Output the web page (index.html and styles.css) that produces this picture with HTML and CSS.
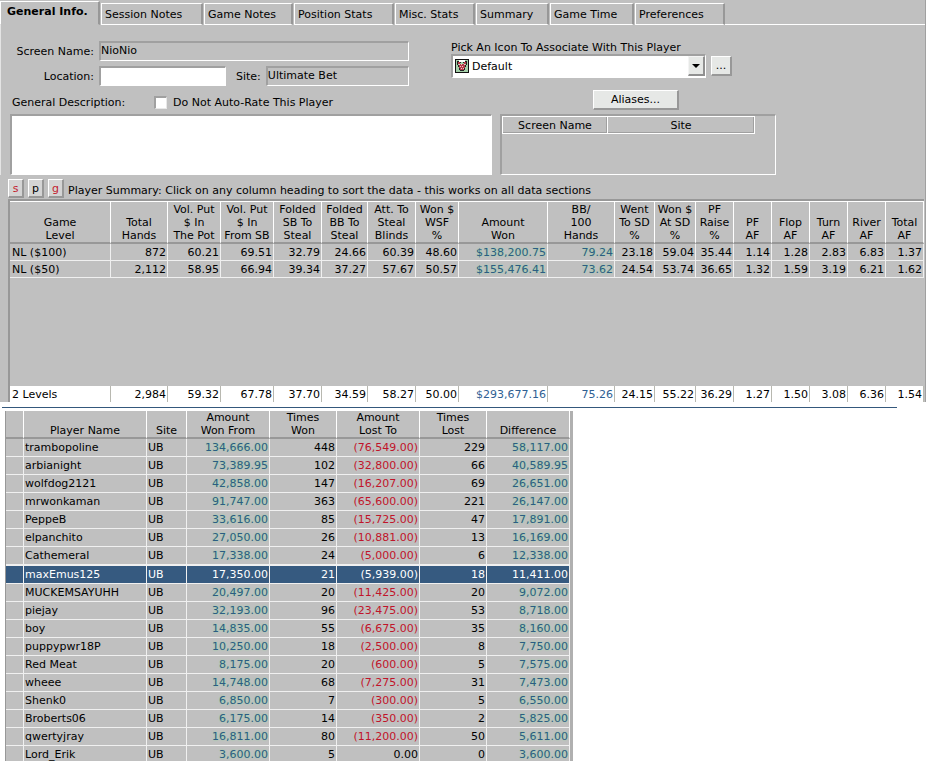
FILE: index.html
```html
<!DOCTYPE html>
<html lang="en">
<head>
<meta charset="utf-8">
<title>Player Information</title>
<link rel="stylesheet" href="styles.css">
</head>
<body>
<main class="panel">
  <nav class="tabs">
    <button class="tab active">General Info.</button>
    <button class="tab session">Session Notes</button>
    <button class="tab notes">Game Notes</button>
    <button class="tab position">Position Stats</button>
    <button class="tab misc">Misc. Stats</button>
    <button class="tab summary-tab">Summary</button>
    <button class="tab time">Game Time</button>
    <button class="tab prefs">Preferences</button>
    <span class="tab-rest"></span>
  </nav>

  <form class="form">
    <div class="left">
      <div class="field-row">
        <label class="lead" for="screen">Screen Name:</label>
        <input class="field grow readonly" id="screen" value="NioNio" readonly>
      </div>
      <div class="field-row">
        <label class="lead" for="location">Location:</label>
        <input class="field location" id="location">
        <label class="site-label" for="site">Site:</label>
        <input class="field grow readonly" id="site" value="Ultimate Bet" readonly>
      </div>
      <div class="desc-row">
        <label class="desc-label" for="desc">General Description:</label>
        <input class="check" type="checkbox" id="rate">
        <label for="rate">Do Not Auto-Rate This Player</label>
      </div>
      <textarea class="desc" id="desc"></textarea>
    </div>
    <div class="right">
      <div class="picker">
        <label for="icon">Pick An Icon To Associate With This Player</label>
        <div class="picker-row">
          <div class="combo">
            <select class="select" id="icon"><option>Default</option></select>
            <svg class="face" viewBox="0 0 14 14" width="14" height="14" aria-hidden="true">
              <path fill="#111" d="M0 0h14v14H0z"/>
              <path fill="#a4cfa8" d="M1 1h12v12H1z"/>
              <path fill="#fff" d="M4 1h6v2H4z"/>
              <path fill="#222" d="M2 2h2v1H2zM10 2h2v1h-2zM2 3h1v3H2zM11 3h1v3h-1zM5 3h1v1H5zM8 3h1v1H8zM3 6h1v2H3zM10 6h1v2h-1zM4 9h1v2H4zM9 9h1v2H9zM5 11h4v1H5z"/>
              <path fill="#b23a48" d="M3 3h2v2H3zM9 3h2v2H9zM4 5h6v4H4zM5 9h4v2H5z"/>
              <path fill="#f0c4c4" d="M4 5h1v1H4zM6 5h1v1H6zM9 5h1v1H9zM5 7h1v1H5zM7 7h1v1H7zM6 9h1v1H6zM8 9h1v1H8z"/>
            </svg>
            <span class="drop"></span>
          </div>
          <button class="more" type="button">...</button>
        </div>
      </div>
      <button class="aliases" type="button">Aliases...</button>
      <div class="alias-box">
        <table class="alias-table">
          <colgroup><col class="a1"><col class="a2"></colgroup>
          <thead><tr><th>Screen Name</th><th>Site</th></tr></thead>
        </table>
      </div>
    </div>
  </form>

  <div class="caption">
    <button class="mini red">s</button>
    <button class="mini">p</button>
    <button class="mini red">g</button>
    <span class="caption-text">Player Summary: Click on any column heading to sort the data - this works on all data sections</span>
  </div>

  <div class="grid-box">
    <table class="stats">
      <colgroup>
        <col class="w101"><col class="w57"><col class="w53"><col class="w53"><col class="w48"><col class="w46"><col class="w48"><col class="w43"><col class="w89"><col class="w67"><col class="w40"><col class="w41"><col class="w38"><col class="w38"><col class="w38"><col class="w38"><col class="w38"><col class="w38">
      </colgroup>
      <thead>
        <tr><th>Game<br>Level</th><th>Total<br>Hands</th><th>Vol. Put<br>$ In<br>The Pot</th><th>Vol. Put<br>$ In<br>From SB</th><th>Folded<br>SB To<br>Steal</th><th>Folded<br>BB To<br>Steal</th><th>Att. To<br>Steal<br>Blinds</th><th>Won $<br>WSF<br>%</th><th>Amount<br>Won</th><th>BB/<br>100<br>Hands</th><th>Went<br>To SD<br>%</th><th>Won $<br>At SD<br>%</th><th>PF<br>Raise<br>%</th><th>PF<br>AF</th><th>Flop<br>AF</th><th>Turn<br>AF</th><th>River<br>AF</th><th>Total<br>AF</th></tr>
      </thead>
      <tbody>
        <tr><td class="name">NL ($100)</td><td>872</td><td>60.21</td><td>69.51</td><td>32.79</td><td>24.66</td><td>60.39</td><td>48.60</td><td class="pos">$138,200.75</td><td class="pos">79.24</td><td>23.18</td><td>59.04</td><td>35.44</td><td>1.14</td><td>1.28</td><td>2.83</td><td>6.83</td><td>1.37</td></tr>
        <tr><td class="name">NL ($50)</td><td>2,112</td><td>58.95</td><td>66.94</td><td>39.34</td><td>37.27</td><td>57.67</td><td>50.57</td><td class="pos">$155,476.41</td><td class="pos">73.62</td><td>24.54</td><td>53.74</td><td>36.65</td><td>1.32</td><td>1.59</td><td>3.19</td><td>6.21</td><td>1.62</td></tr>
        <tr class="spacer"><td colspan="18"></td></tr>
      </tbody>
      <tfoot>
        <tr><td class="name">2 Levels</td><td>2,984</td><td>59.32</td><td>67.78</td><td>37.70</td><td>34.59</td><td>58.27</td><td>50.00</td><td class="sum">$293,677.16</td><td class="sum">75.26</td><td>24.15</td><td>55.22</td><td>36.29</td><td>1.27</td><td>1.50</td><td>3.08</td><td>6.36</td><td>1.54</td></tr>
      </tfoot>
    </table>
  </div>
</main>

<hr class="rule">

<div class="versus-box">
  <table class="versus">
    <colgroup>
      <col class="v18"><col class="v123"><col class="v40"><col class="v83"><col class="v67"><col class="v83"><col class="v67"><col class="v83">
    </colgroup>
    <thead>
      <tr><th></th><th>Player Name</th><th>Site</th><th>Amount<br>Won From</th><th>Times<br>Won</th><th>Amount<br>Lost To</th><th>Times<br>Lost</th><th>Difference</th></tr>
    </thead>
    <tbody>
      <tr><td></td><td class="name">trambopoline</td><td class="name">UB</td><td class="pos">134,666.00</td><td>448</td><td class="neg">(76,549.00)</td><td>229</td><td class="pos">58,117.00</td></tr>
      <tr><td></td><td class="name">arbianight</td><td class="name">UB</td><td class="pos">73,389.95</td><td>102</td><td class="neg">(32,800.00)</td><td>66</td><td class="pos">40,589.95</td></tr>
      <tr><td></td><td class="name">wolfdog2121</td><td class="name">UB</td><td class="pos">42,858.00</td><td>147</td><td class="neg">(16,207.00)</td><td>69</td><td class="pos">26,651.00</td></tr>
      <tr><td></td><td class="name">mrwonkaman</td><td class="name">UB</td><td class="pos">91,747.00</td><td>363</td><td class="neg">(65,600.00)</td><td>221</td><td class="pos">26,147.00</td></tr>
      <tr><td></td><td class="name">PeppeB</td><td class="name">UB</td><td class="pos">33,616.00</td><td>85</td><td class="neg">(15,725.00)</td><td>47</td><td class="pos">17,891.00</td></tr>
      <tr><td></td><td class="name">elpanchito</td><td class="name">UB</td><td class="pos">27,050.00</td><td>26</td><td class="neg">(10,881.00)</td><td>13</td><td class="pos">16,169.00</td></tr>
      <tr><td></td><td class="name">Cathemeral</td><td class="name">UB</td><td class="pos">17,338.00</td><td>24</td><td class="neg">(5,000.00)</td><td>6</td><td class="pos">12,338.00</td></tr>
      <tr class="selected"><td></td><td class="name">maxEmus125</td><td class="name">UB</td><td>17,350.00</td><td>21</td><td>(5,939.00)</td><td>18</td><td>11,411.00</td></tr>
      <tr><td></td><td class="name">MUCKEMSAYUHH</td><td class="name">UB</td><td class="pos">20,497.00</td><td>20</td><td class="neg">(11,425.00)</td><td>20</td><td class="pos">9,072.00</td></tr>
      <tr><td></td><td class="name">piejay</td><td class="name">UB</td><td class="pos">32,193.00</td><td>96</td><td class="neg">(23,475.00)</td><td>53</td><td class="pos">8,718.00</td></tr>
      <tr><td></td><td class="name">boy</td><td class="name">UB</td><td class="pos">14,835.00</td><td>55</td><td class="neg">(6,675.00)</td><td>35</td><td class="pos">8,160.00</td></tr>
      <tr><td></td><td class="name">puppypwr18P</td><td class="name">UB</td><td class="pos">10,250.00</td><td>18</td><td class="neg">(2,500.00)</td><td>8</td><td class="pos">7,750.00</td></tr>
      <tr><td></td><td class="name">Red Meat</td><td class="name">UB</td><td class="pos">8,175.00</td><td>20</td><td class="neg">(600.00)</td><td>5</td><td class="pos">7,575.00</td></tr>
      <tr><td></td><td class="name">wheee</td><td class="name">UB</td><td class="pos">14,748.00</td><td>68</td><td class="neg">(7,275.00)</td><td>31</td><td class="pos">7,473.00</td></tr>
      <tr><td></td><td class="name">Shenk0</td><td class="name">UB</td><td class="pos">6,850.00</td><td>7</td><td class="neg">(300.00)</td><td>5</td><td class="pos">6,550.00</td></tr>
      <tr><td></td><td class="name">Broberts06</td><td class="name">UB</td><td class="pos">6,175.00</td><td>14</td><td class="neg">(350.00)</td><td>2</td><td class="pos">5,825.00</td></tr>
      <tr><td></td><td class="name">qwertyjray</td><td class="name">UB</td><td class="pos">16,811.00</td><td>80</td><td class="neg">(11,200.00)</td><td>50</td><td class="pos">5,611.00</td></tr>
      <tr><td></td><td class="name">Lord_Erik</td><td class="name">UB</td><td class="pos">3,600.00</td><td>5</td><td>0.00</td><td>0</td><td class="pos">3,600.00</td></tr>
    </tbody>
  </table>
</div>
</body>
</html>
```
FILE: styles.css
```css
* { box-sizing: border-box; }

body {
  margin: 0;
  height: 100vh;
  overflow: hidden;
  background: #fff;
  color: #000;
  font: 11px/13px Verdana, "DejaVu Sans", sans-serif;
}

button, input, select, textarea {
  margin: 0;
  font: inherit;
  color: inherit;
  border-radius: 0;
}

.panel {
  margin-right: 1px;
  padding-top: 1px;
  background: #c0c0c0;
  border-right: 1px solid #a0a0a0;
}

/* Tabs */
.tabs {
  display: flex;
  align-items: flex-end;
  gap: 1px;
  height: 24px;
}
.tab {
  height: 22px;
  padding: 0 0 0 3px;
  text-align: left;
  background: #c0c0c0;
  border: solid;
  border-width: 1px 2px 1px 1px;
  border-color: #fff #989898 #fff #fff;
}
.tab.active {
  width: 100px;
  height: 24px;
  padding: 0 0 3px 6px;
  font-weight: bold;
  border-bottom-color: #c0c0c0;
}
.session { width: 102px; }
.notes { width: 89px; }
.position { width: 100px; }
.misc { width: 80px; }
.summary-tab { width: 73px; }
.time { width: 84px; }
.prefs { width: 90px; }
.tab-rest {
  flex: 1;
  margin-left: -1px;
  border-bottom: 1px solid #fff;
}

/* Form */
.form {
  display: flex;
  gap: 8px;
  padding: 16px 8px 0 9px;
  border-left: 1px solid #e4e4e4;
}
.left { width: 482px; }
.field-row {
  display: flex;
  align-items: center;
  width: 399px;
  height: 20px;
  margin-bottom: 5px;
}
.lead {
  width: 89px;
  padding-right: 5px;
  text-align: right;
  white-space: nowrap;
}
.field, .desc, .alias-box, .select {
  background: #fff;
  border: solid;
  border-width: 2px 1px 1px 2px;
  border-color: #a0a0a0 #fff #fff #a0a0a0;
  outline: 0;
}
.field {
  height: 20px;
  min-width: 0;
  padding: 0 0 2px;
}
.readonly { background: #c0c0c0; }
.grow { flex: 1; }
.location { width: 127px; }
.site-label { padding: 0 5px 0 10px; }
.desc-row {
  display: flex;
  align-items: center;
  height: 23px;
  padding-left: 2px;
}
.desc-label { width: 142px; }
.check {
  appearance: none;
  width: 13px;
  height: 13px;
  margin-right: 6px;
  background: #fff;
  border: solid;
  border-width: 2px 1px 1px 2px;
  border-color: #a0a0a0 #e8e8e8 #e8e8e8 #a0a0a0;
}
.desc {
  display: block;
  width: 100%;
  height: 61px;
  resize: none;
}

.right {
  display: flex;
  flex-direction: column;
  align-items: flex-start;
  width: 276px;
}
.picker { margin-left: -49px; }
.picker label { display: block; }
.picker-row {
  display: flex;
  align-items: center;
  gap: 5px;
}
.combo {
  position: relative;
  width: 255px;
}
.select {
  appearance: none;
  display: block;
  width: 100%;
  height: 24px;
  padding: 0 20px 0 19px;
}
.face {
  position: absolute;
  left: 4px;
  top: 5px;
}
.drop {
  position: absolute;
  top: 2px;
  right: 1px;
  width: 17px;
  height: 20px;
  background: #e6e8e6;
  border: solid;
  border-width: 1px 2px 2px 1px;
  border-color: #f4f4f4 #909090 #909090 #f4f4f4;
  pointer-events: none;
}
.drop::after {
  content: "";
  position: absolute;
  left: 3px;
  top: 7px;
  border: 4px solid transparent;
  border-top-color: #000;
  border-bottom: 0;
}
.more, .aliases, .mini {
  padding: 0;
  background: #e6e8e6;
  border: solid;
  border-width: 1px 2px 2px 1px;
  border-color: #fff #989898 #989898 #fff;
}
.more {
  width: 21px;
  height: 20px;
}
.aliases {
  width: 86px;
  height: 20px;
  margin: 12px 0 4px 93px;
}
.alias-box {
  width: 100%;
  height: 61px;
  background: #c0c0c0;
}
.alias-table {
  width: 253px;
  table-layout: fixed;
  border-collapse: collapse;
}
.a1 { width: 105px; }
.alias-table th {
  height: 17px;
  padding: 0;
  font-weight: normal;
  border: 1px solid #fff;
  box-shadow: inset -1px -1px #a0a0a0;
}

/* Summary caption */
.caption {
  display: flex;
  align-items: center;
  gap: 4px;
  height: 24px;
  padding: 3px 0 0 8px;
}
.mini {
  width: 16px;
  height: 19px;
  background: #d4d4d4;
}
.red { color: #c3202f; }
.caption-text { white-space: nowrap; padding-top: 3px; }

/* Tables */
.grid-box {
  margin: 0 1px 0 8px;
  border: solid #989898;
  border-width: 2px 0 0 2px;
}
.stats, .versus {
  width: 100%;
  table-layout: fixed;
  border-collapse: separate;
  border-spacing: 0;
}
.stats th, .versus th {
  padding: 0;
  font-weight: normal;
  text-align: center;
  vertical-align: bottom;
  white-space: nowrap;
  border-top: 1px solid #fff;
  border-right: 1px solid #fff;
  border-bottom: 2px solid #989898;
}
.stats th { height: 43px; }
.stats td, .versus td {
  padding: 0 1px 0 0;
  text-align: right;
  white-space: nowrap;
  border-right: 1px solid #f0f0f0;
  border-bottom: 1px solid #f0f0f0;
}
.stats td { height: 17px; }
.stats .name, .versus .name {
  padding-left: 2px;
  text-align: left;
}
.versus .name { padding-left: 1px; }
.stats .spacer td {
  height: 108px;
  border: 0;
}
.stats tfoot td {
  height: 16px;
  background: #fff;
  border-right: 1px solid #b8b8b0;
  border-bottom: 0;
}
.pos {
  color: #2c5c84;
  text-shadow: 0 0 2px #8fdc9c;
}
.sum { color: #2f5f93; }
.neg { color: #c0142a; }

.w101 { width: 101px; }
.w89 { width: 89px; }
.w67 { width: 67px; }
.w57 { width: 57px; }
.w53 { width: 53px; }
.w48 { width: 48px; }
.w46 { width: 46px; }
.w43 { width: 43px; }
.w41 { width: 41px; }
.w40 { width: 40px; }
.w38 { width: 38px; }

.rule {
  margin: 5px 30px 3px 2px;
  border: 0;
  border-top: 1px solid #34587c;
}

.versus-box {
  width: 568px;
  margin-left: 5px;
  background: #c0c0c0;
  border-left: 1px solid #989898;
  border-right: 3px solid #b0b0b0;
}
.versus th { height: 28px; border-top: 0; }
.versus td { height: 18px; }
.versus .selected td {
  height: 19px;
  background: #365a80;
  border-top: 1px solid #f0f0f0;
  color: #fff;
}
.v18 { width: 18px; }
.v123 { width: 123px; }
.v40 { width: 40px; }
.v83 { width: 83px; }
.v67 { width: 67px; }
```
